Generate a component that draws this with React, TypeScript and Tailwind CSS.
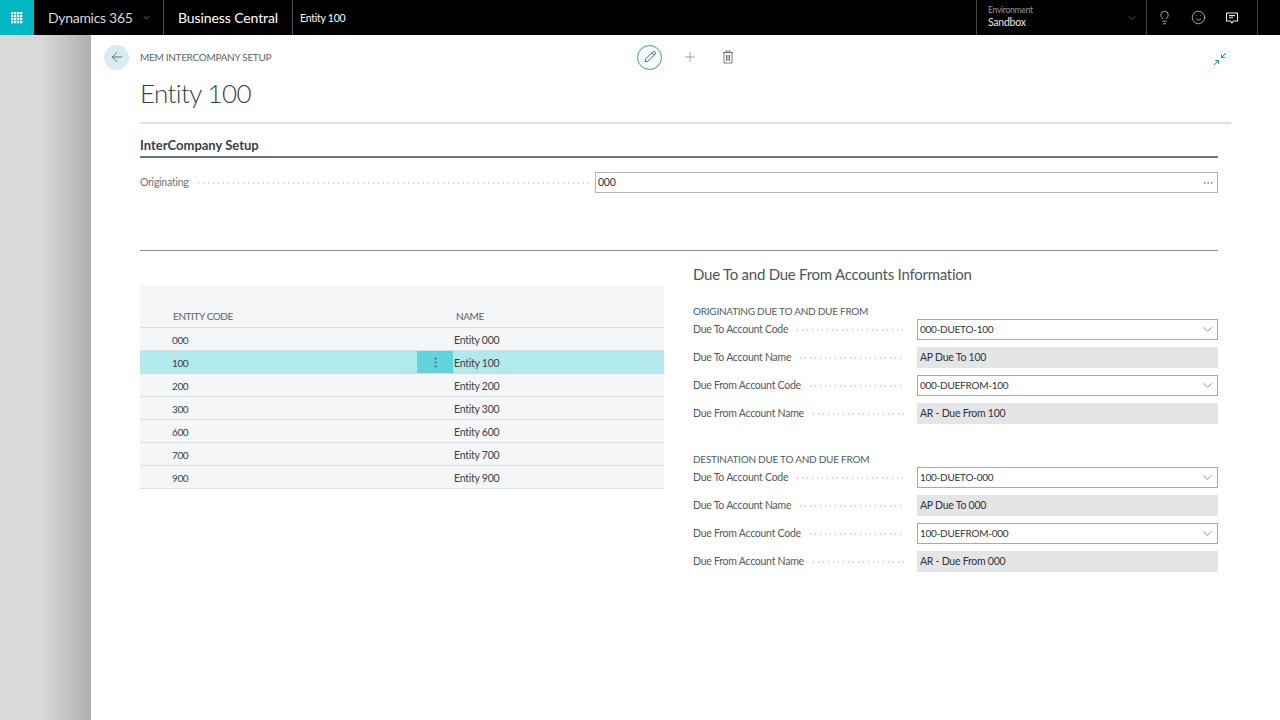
import React from "react";
import { ArrowLeft, Plus, ChevronDown, Lightbulb, Smile, MoreHorizontal, MoreVertical } from "lucide-react";

const entities = [
  { code: "000", name: "Entity 000" },
  { code: "100", name: "Entity 100", selected: true },
  { code: "200", name: "Entity 200" },
  { code: "300", name: "Entity 300" },
  { code: "600", name: "Entity 600" },
  { code: "700", name: "Entity 700" },
  { code: "900", name: "Entity 900" },
];

function WaffleIcon() {
  const cells = [0, 1, 2, 3].flatMap((y) => [0, 1, 2, 3].map((x) => [x, y]));
  return (
    <svg width="12" height="12" viewBox="0 0 12 12" fill="#ffffff">
      {cells.map(([x, y]) => (
        <rect key={`${x}-${y}`} x={x * 3} y={y * 3} width="2.3" height="2.3" />
      ))}
    </svg>
  );
}

function FeedbackIcon() {
  return (
    <svg width="14" height="14" viewBox="0 0 14 14" fill="none" stroke="#e8e8e8" strokeWidth="1.1">
      <path d="M1.5 2h11v8H8.6L7 11.8 5.4 10H1.5z" />
      <path d="M4 4.6h6M4 6.8h4" />
    </svg>
  );
}

function PencilIcon() {
  return (
    <svg width="14" height="14" viewBox="0 0 14 14" fill="none" stroke="#1f7f8c" strokeWidth="1">
      <path d="M2 12l.8-3.2L9.8 1.8a1.4 1.4 0 0 1 2 0l.4.4a1.4 1.4 0 0 1 0 2L5.2 11.2z" />
      <path d="M8.8 2.8l2.4 2.4" />
    </svg>
  );
}

function TrashIcon() {
  return (
    <svg width="12" height="14" viewBox="0 0 12 14" fill="none" stroke="#7a7a7a" strokeWidth="1">
      <path d="M1 2.5h10M4 2.5V1h4v1.5M2 2.5v10.5h8V2.5M4.5 5v6M6 5v6M7.5 5v6" />
    </svg>
  );
}

function CollapseIcon() {
  return (
    <svg width="14" height="14" viewBox="0 0 14 14" fill="none" stroke="#2a8f9c" strokeWidth="1">
      <path d="M1 13l4.5-4.5M2.2 8.5h3.3v3.3" />
      <path d="M13 1L8.5 5.5M8.5 2.2v3.3h3.3" />
    </svg>
  );
}

function Dots(props: { className: string }) {
  return (
    <div
      className={`flex-1 ml-[7px] h-[2px] bg-[radial-gradient(circle,#d0d3d5_0.7px,transparent_0.9px)] bg-[length:5px_2px] ${props.className}`}
    />
  );
}

function SelectField(props: { label: string; value: string }) {
  return (
    <div className="flex items-center h-[28px]">
      <div className="w-[224px] pt-[2px] flex items-center shrink-0 text-[#505a5f]">
        <span>{props.label}</span>
        <Dots className="mr-[12px]" />
      </div>
      <div className="flex-1 h-[21px] border border-[#a9a9a9] bg-white flex items-center justify-between pl-[2px] pr-[2px] text-[#2f3538]">
        <span className="text-[10px] tracking-[-0.25px]">{props.value}</span>
        <ChevronDown size={15} strokeWidth={1} color="#555" />
      </div>
    </div>
  );
}

function ReadonlyField(props: { label: string; value: string }) {
  return (
    <div className="flex items-center h-[28px]">
      <div className="w-[224px] pt-[2px] flex items-center shrink-0 text-[#505a5f]">
        <span>{props.label}</span>
        <Dots className="mr-[12px]" />
      </div>
      <div className="flex-1 h-[21px] pt-[2px] bg-[#e4e5e6] flex items-center pl-[3px] text-[#2f3538]">{props.value}</div>
    </div>
  );
}

function AccountGroup(props: { title: string; code1: string; name1: string; code2: string; name2: string }) {
  return (
    <div>
      <div className="h-[18px] leading-[18px] -mb-[5px] text-[#505a5f] text-[10px]">{props.title}</div>
      <SelectField label="Due To Account Code" value={props.code1} />
      <ReadonlyField label="Due To Account Name" value={props.name1} />
      <SelectField label="Due From Account Code" value={props.code2} />
      <ReadonlyField label="Due From Account Name" value={props.name2} />
    </div>
  );
}

export default function App() {
  return (
    <div className="w-[1280px] h-[720px] overflow-hidden flex flex-col bg-white text-[10.5px] tracking-[-0.25px] font-['Lato',sans-serif]">
      <header className="h-[35px] shrink-0 bg-black flex items-stretch text-white">
        <div className="w-[34px] bg-[#00b7c3] flex items-center justify-center">
          <WaffleIcon />
        </div>
        <div className="w-[130px] pl-[14px] flex items-center gap-[8px] border-r border-[#555] text-[#d8d8d8] text-[14px] tracking-[-0.3px]">
          <span>Dynamics 365</span>
          <ChevronDown size={11} strokeWidth={1} />
        </div>
        <div className="w-[129px] pl-[14px] flex items-center border-r border-[#555] text-[14px] tracking-[-0.1px]">Business Central</div>
        <div className="flex-1 pl-[7px] pt-[2px] flex items-center">Entity 100</div>
        <div className="w-[170px] border-l border-[#444] pl-[11px] pr-[8px] flex items-center justify-between">
          <div className="leading-[12px] -mt-[3px]">
            <div className="text-[8.5px] text-[#999]">Environment</div>
            <div className="text-[#e8e8e8]">Sandbox</div>
          </div>
          <ChevronDown size={12} strokeWidth={1} color="#aaa" />
        </div>
        <div className="w-[112px] border-l border-r border-[#444] flex items-center gap-[19px] pl-[10px]">
          <Lightbulb size={15} strokeWidth={1} />
          <Smile size={15} strokeWidth={1} />
          <FeedbackIcon />
        </div>
        <div className="w-[22px]" />
      </header>

      <div className="flex-1 flex min-h-0">
        <div className="w-[91px] shrink-0 bg-gradient-to-r from-[#d9d9d9] from-45% to-[#b0b0b0]" />
        <main className="flex-1 bg-white pl-[49px] pr-[62px] flex flex-col">
          <div className="h-[44px] flex items-center relative -ml-[36px] -mr-[13px]">
            <div className="w-[25px] h-[25px] rounded-full bg-[#d8edf1] flex items-center justify-center">
              <ArrowLeft size={16} strokeWidth={1.1} color="#444" />
            </div>
            <div className="ml-[11px] w-[497px] text-[10px] tracking-[-0.3px] text-[#5e6569]">MEM INTERCOMPANY SETUP</div>
            <div className="w-[25px] h-[25px] rounded-full border border-[#3c98a4] flex items-center justify-center">
              <PencilIcon />
            </div>
            <div className="ml-[20px]">
              <Plus size={16} strokeWidth={1} color="#777" />
            </div>
            <div className="ml-[24px]">
              <TrashIcon />
            </div>
            <div className="flex-1 flex justify-end pr-[4px] pt-[4px]">
              <CollapseIcon />
            </div>
          </div>

          <h1 className="h-[43px] leading-[28px] text-[26px] tracking-[-0.6px] font-light text-[#3a3f42]">Entity 100</h1>

          <div className="h-[2px] bg-[#e0e0e0] -mr-[13px]" />

          <section className="mt-[13px]">
            <div className="h-[19px] leading-[17px] text-[13px] tracking-normal font-bold text-[#3a4144]">InterCompany Setup</div>
            <div className="h-[2px] bg-[#69757a]" />
            <div className="flex items-center mt-[14px] h-[21px]">
              <div className="w-[455px] flex items-center shrink-0 text-[#6c7479]">
                <span>Originating</span>
                <Dots className="mr-[5px]" />
              </div>
              <div className="flex-1 h-[21px] border border-[#b4b4b4] flex items-center justify-between pl-[2px] pr-[3px] text-[#2f3538]">
                <span>000</span>
                <MoreHorizontal size={12} strokeWidth={1} color="#555" />
              </div>
            </div>
          </section>

          <div className="h-px bg-[#8a8f91] mt-[57px]" />

          <section className="flex mt-[13px]">
            <div className="w-[524px] shrink-0 mt-[22px]">
              <div className="bg-[#f5f6f7] text-[#3a4144]">
                <div className="h-[42px] flex items-end border-b border-[#dcdfe0] pb-[3px] text-[#5b6367] text-[10px] tracking-[-0.4px]">
                  <div className="w-[316px] pl-[33px]">ENTITY CODE</div>
                  <div>NAME</div>
                </div>
                {entities.map((row) => (
                  <div
                    key={row.code}
                    className={
                      row.selected
                        ? "h-[23px] flex items-stretch bg-[#b2e9ec]"
                        : "h-[23px] flex items-stretch border-b border-[#dcdfe0]"
                    }
                  >
                    <div className="w-[277px] pl-[32px] pt-[2px] flex items-center text-[10px] tracking-[-0.4px]">{row.code}</div>
                    <div className={row.selected ? "w-[36px] mb-[1px] bg-[#62d2dc] flex items-center justify-center" : "w-[36px]"}>
                      {row.selected && <MoreVertical size={13} strokeWidth={1.2} color="#1f4e55" />}
                    </div>
                    <div className={row.selected ? "pl-[1px] pt-[2px] flex items-center" : "pl-[1px] pt-[3px] flex items-center"}>{row.name}</div>
                  </div>
                ))}
              </div>
            </div>

            <div className="flex-1 ml-[29px] min-w-0">
              <h2 className="h-[22px] leading-[20px] text-[15px] text-[#4d575c]">Due To and Due From Accounts Information</h2>
              <div className="mt-[16px]">
                <AccountGroup
                  title="ORIGINATING DUE TO AND DUE FROM"
                  code1="000-DUETO-100"
                  name1="AP Due To 100"
                  code2="000-DUEFROM-100"
                  name2="AR - Due From 100"
                />
              </div>
              <div className="mt-[23px]">
                <AccountGroup
                  title="DESTINATION DUE TO AND DUE FROM"
                  code1="100-DUETO-000"
                  name1="AP Due To 000"
                  code2="100-DUEFROM-000"
                  name2="AR - Due From 000"
                />
              </div>
            </div>
          </section>
        </main>
      </div>
    </div>
  );
}
